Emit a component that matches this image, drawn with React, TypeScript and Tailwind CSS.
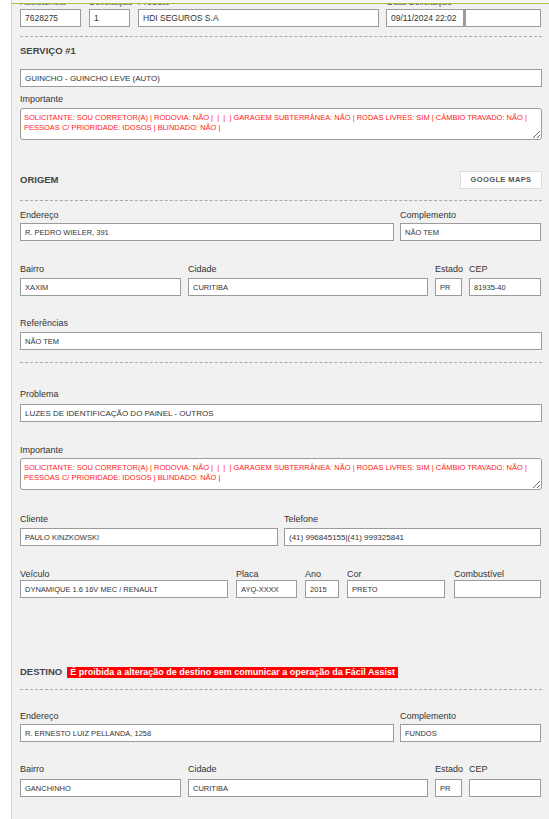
import React from "react";

const font = { fontFamily: '"Liberation Sans", Arial, sans-serif' };

type FieldProps = {
    label?: string;
    value?: string;
    w: string;
    size?: string;
    labelGap?: string;
};

function Field({ label, value = "", w, size = "text-[7.5px]", labelGap = "mb-[3px]" }: FieldProps) {
    return (
        <div className={`flex flex-col shrink-0 ${w}`}>
            {label !== undefined && (
                <span className={`text-[9px] leading-[12px] text-[#333] whitespace-nowrap ${labelGap}`}>{label}</span>
            )}
            <input
                readOnly
                value={value}
                className={`h-[18px] w-full bg-white border border-[#9b9b9b] px-[4px] ${size} text-[#333] outline-none`}
            />
        </div>
    );
}

function Dashed({ mt }: { mt: string }) {
    return <div className={`${mt} border-t border-dashed border-[#a9a9a9]`} />;
}

function Importante({ mt, labelGap }: { mt: string; labelGap: string }) {
    return (
        <div className={`${mt} flex flex-col`}>
            <span className={`text-[9px] leading-[12px] text-[#333] ${labelGap}`}>Importante</span>
            <textarea
                readOnly
                value={"SOLICITANTE: SOU CORRETOR(A) | RODOVIA: NÃO |  |  |  | GARAGEM SUBTERRÂNEA: NÃO | RODAS LIVRES: SIM | CÂMBIO TRAVADO: NÃO |\nPESSOAS C/ PRIORIDADE: IDOSOS | BLINDADO: NÃO |"}
                className="h-[32px] w-full bg-white border border-[#9b9b9b] rounded-[3px] px-[3px] pt-[4px] text-[7.5px] leading-[10px] text-[#ff2020] outline-none overflow-hidden"
            />
        </div>
    );
}

export default function App() {
    return (
        <div className="w-[549px] h-[819px] overflow-hidden bg-white flex" style={font}>
            <div className="w-[11px] shrink-0 bg-white" />
            <div className="flex-1 bg-[#f1f1f1] border-l border-[#d4d4d4] flex flex-col">
                {/* header strip cut by scroll */}
                <div className="h-[4px] border-b border-[#a6c24a] bg-[#f6f6f6]" />
                <div className="px-[8px] flex flex-col">
                    <div className="h-[4px] overflow-hidden">
                        <div className="flex gap-[8px] -mt-[8px] text-[9px] leading-[12px] text-[#555]">
                            <span className="w-[61px]">Assistência</span>
                            <span className="w-[41px]">Solicitação</span>
                            <span className="w-[241px]">Produto</span>
                            <span className="w-[155px]">Data Solicitação</span>
                        </div>
                    </div>
                    <div className="flex mt-[1px]">
                        <Field w="w-[61px]" value="7628275" size="text-[8.5px]" />
                        <div className="w-[8px]" />
                        <Field w="w-[41px]" value="1" size="text-[8.5px]" />
                        <div className="w-[8px]" />
                        <Field w="w-[241px]" value="HDI SEGUROS S.A" size="text-[8.5px]" />
                        <div className="w-[7px]" />
                        <Field w="w-[78px]" value="09/11/2024 22:02" size="text-[8.5px]" />
                        <div className="w-[77px] h-[18px] bg-white border border-[#9b9b9b] border-l-2" />
                    </div>

                    <Dashed mt="mt-[9px]" />

                    {/* Serviço */}
                    <h2 className="mt-[8px] text-[9.5px] leading-[12px] font-bold text-[#444]">SERVIÇO #1</h2>
                    <div className="mt-[12px] flex">
                        <Field w="w-full" value="GUINCHO - GUINCHO LEVE (AUTO)" size="text-[8px]" />
                    </div>
                    <Importante mt="mt-[6px]" labelGap="mb-[3px]" />

                    {/* Origem */}
                    <div className="mt-[31px] flex items-center justify-between">
                        <h2 className="text-[9.5px] leading-[12px] font-bold text-[#444]">ORIGEM</h2>
                        <button className="h-[18px] w-[82px] bg-white border border-[#dcdcdc] text-[7.5px] font-bold tracking-[0.4px] text-[#555]">
                            GOOGLE MAPS
                        </button>
                    </div>
                    <Dashed mt="mt-[11px]" />

                    <div className="mt-[8px] flex gap-[6px]">
                        <Field label="Endereço" w="w-[374px]" value="R. PEDRO WIELER, 391" labelGap="mb-[2px]" />
                        <Field label="Complemento" w="w-[141px]" value="NÃO TEM" labelGap="mb-[2px]" />
                    </div>
                    <div className="mt-[22px] flex gap-[7px]">
                        <Field label="Bairro" w="w-[161px]" value="XAXIM" />
                        <Field label="Cidade" w="w-[240px]" value="CURITIBA" />
                        <Field label="Estado" w="w-[27px]" value="PR" />
                        <Field label="CEP" w="w-[72px]" value="81935-40" />
                    </div>
                    <div className="mt-[21px] flex">
                        <Field label="Referências" w="w-full" value="NÃO TEM" />
                    </div>

                    <Dashed mt="mt-[12px]" />

                    {/* Problema */}
                    <div className="mt-[25px] flex">
                        <Field label="Problema" w="w-full" value="LUZES DE IDENTIFICAÇÃO DO PAINEL - OUTROS" size="text-[8px]" labelGap="mb-[4px]" />
                    </div>
                    <Importante mt="mt-[22px]" labelGap="mb-[2px]" />

                    <div className="mt-[23px] flex gap-[6px]">
                        <Field label="Cliente" w="w-[258px]" value="PAULO KINZKOWSKI" />
                        <Field label="Telefone" w="w-[257px]" value="(41) 996845155|(41) 999325841" size="text-[8px]" />
                    </div>
                    <div className="mt-[22px] flex">
                        <Field label="Veículo" w="w-[208px]" value="DYNAMIQUE 1.6 16V MEC / RENAULT" labelGap="mb-0" />
                        <div className="w-[8px]" />
                        <Field label="Placa" w="w-[61px]" value="AYQ-XXXX" labelGap="mb-0" />
                        <div className="w-[8px]" />
                        <Field label="Ano" w="w-[34px]" value="2015" labelGap="mb-0" />
                        <div className="w-[8px]" />
                        <Field label="Cor" w="w-[98px]" value="PRETO" labelGap="mb-0" />
                        <div className="w-[9px]" />
                        <Field label="Combustível" w="w-[87px]" labelGap="mb-0" />
                    </div>

                    {/* Destino */}
                    <div className="mt-[68px] flex items-center gap-[5px] h-[12px]">
                        <h2 className="text-[9.5px] leading-[12px] font-bold text-[#444]">DESTINO</h2>
                        <span className="bg-[#ff0000] text-white text-[9px] font-bold leading-[11px] px-[3px] whitespace-nowrap">
                            É proibida a alteração de destino sem comunicar a operação da Fácil Assist
                        </span>
                    </div>
                    <Dashed mt="mt-[11px]" />

                    <div className="mt-[20px] flex gap-[6px]">
                        <Field label="Endereço" w="w-[374px]" value="R. ERNESTO LUIZ PELLANDA, 1258" labelGap="mb-[2px]" />
                        <Field label="Complemento" w="w-[141px]" value="FUNDOS" labelGap="mb-[2px]" />
                    </div>
                    <div className="mt-[21px] flex gap-[7px]">
                        <Field label="Bairro" w="w-[161px]" value="GANCHINHO" labelGap="mb-[4px]" />
                        <Field label="Cidade" w="w-[240px]" value="CURITIBA" labelGap="mb-[4px]" />
                        <Field label="Estado" w="w-[27px]" value="PR" labelGap="mb-[4px]" />
                        <Field label="CEP" w="w-[72px]" labelGap="mb-[4px]" />
                    </div>
                </div>
            </div>
        </div>
    );
}
